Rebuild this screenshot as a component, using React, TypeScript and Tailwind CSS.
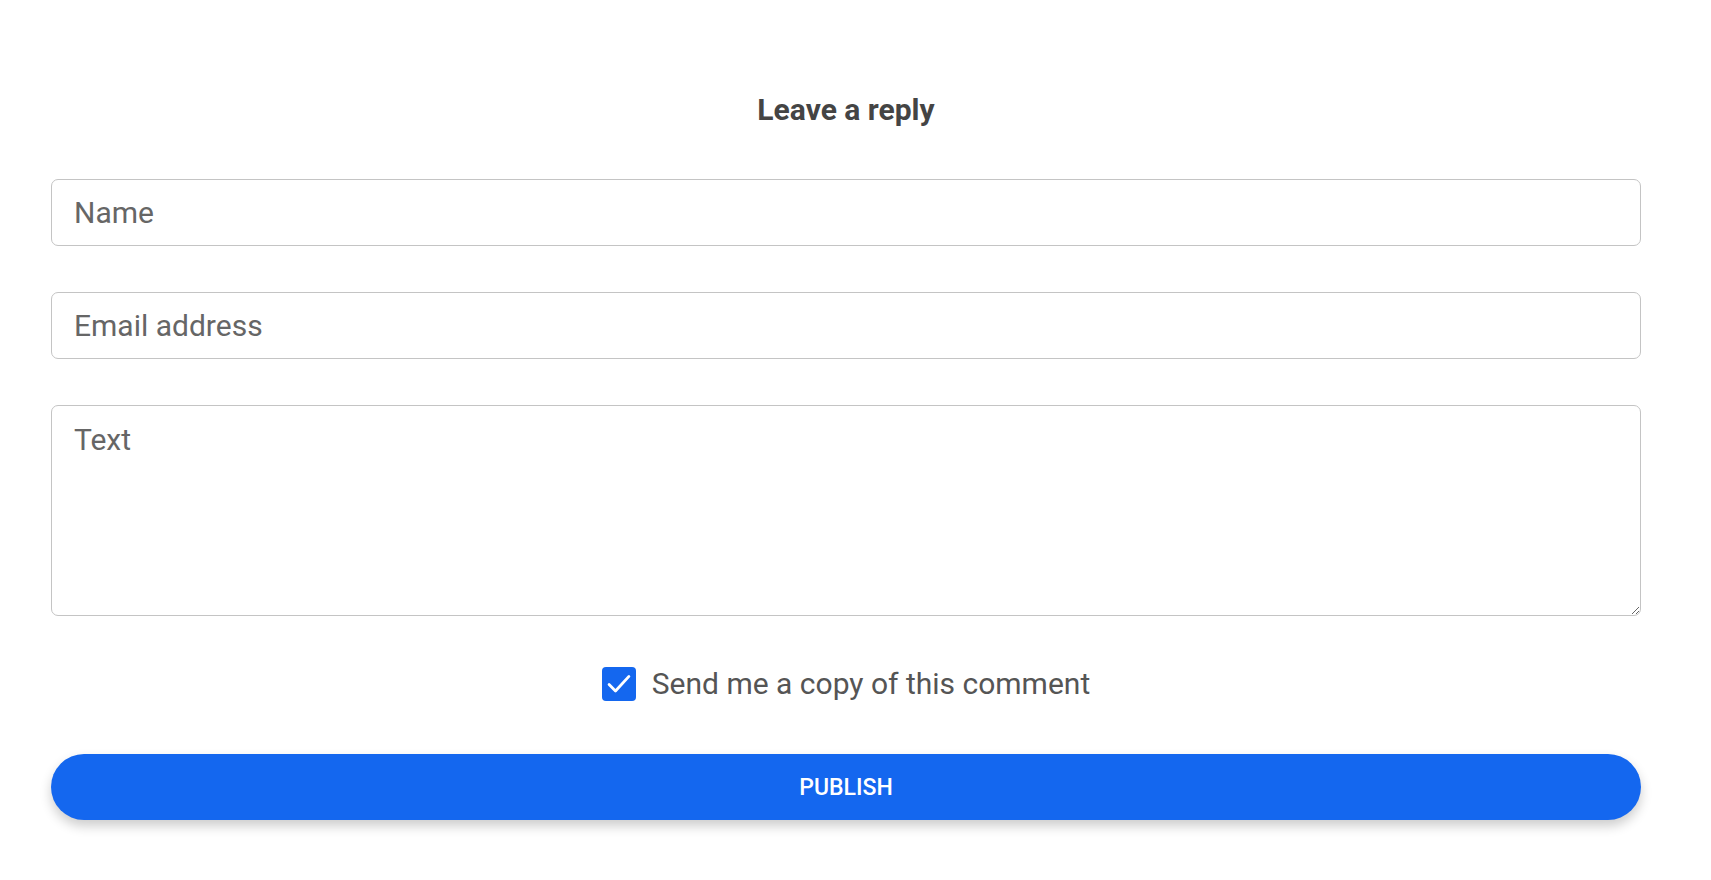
import { useState } from "react";

export default function App() {
  const [copy, setCopy] = useState(true);

  return (
    <div className="min-h-screen bg-white font-['Roboto','Liberation_Sans',sans-serif]">
      <form className="ml-[51px] w-[1590px] pt-[88px]">
        <h2 className="text-center text-[30px] font-bold leading-[44px] text-[#444]">
          Leave a reply
        </h2>

        {/* fields */}
        <div className="mt-[47px] flex flex-col gap-[46px]">
          <input
            placeholder="Name"
            className="h-[67px] w-full rounded-[7px] border border-[#c4c4c4] px-[22px] text-[30px] text-[#555] outline-none placeholder:text-[#666]"
          />
          <input
            placeholder="Email address"
            className="h-[67px] w-full rounded-[7px] border border-[#c4c4c4] px-[22px] text-[30px] text-[#555] outline-none placeholder:text-[#666]"
          />
          <textarea
            placeholder="Text"
            className="block h-[211px] w-full rounded-[7px] border border-[#c4c4c4] px-[22px] pt-[17px] pb-[14px] text-[30px] leading-[34px] text-[#555] outline-none placeholder:text-[#666]"
          />
        </div>

        {/* copy checkbox */}
        <label className="mt-[46px] flex items-center justify-center gap-[16px] text-[30px] leading-[44px] text-[#555]">
          <span
            onClick={() => setCopy(!copy)}
            className="flex h-[34px] w-[34px] items-center justify-center rounded-[4px] bg-[#1467ef]"
          >
            {copy && (
              <svg width="28" height="28" viewBox="0 0 24 24" fill="none">
                <path
                  d="M3.5 12.5l5.5 5.5L20.5 5.5"
                  stroke="white"
                  strokeWidth="2.4"
                  strokeLinecap="round"
                  strokeLinejoin="round"
                />
              </svg>
            )}
          </span>
          <span>Send me a copy of this comment</span>
        </label>

        <button
          type="button"
          className="mt-[48px] h-[66px] w-full rounded-full bg-[#1467ef] pt-[3px] text-[23px] font-medium text-white shadow-[0_6px_12px_rgba(0,0,0,0.2)]"
        >
          PUBLISH
        </button>
      </form>
    </div>
  );
}
